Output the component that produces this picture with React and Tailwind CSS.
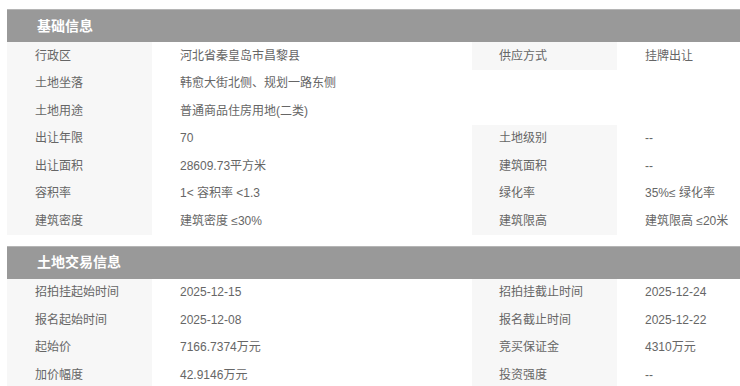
import React from "react";

const font = { fontFamily: '"Liberation Sans", "Noto Sans CJK SC", sans-serif' };

const basic = [
  ["行政区", "河北省秦皇岛市昌黎县", "供应方式", "挂牌出让"],
  ["土地坐落", "韩愈大街北侧、规划一路东侧"],
  ["土地用途", "普通商品住房用地(二类)"],
  ["出让年限", "70", "土地级别", "--"],
  ["出让面积", "28609.73平方米", "建筑面积", "--"],
  ["容积率", "1< 容积率 <1.3", "绿化率", "35%≤ 绿化率"],
  ["建筑密度", "建筑密度 ≤30%", "建筑限高", "建筑限高 ≤20米"],
];

const trade = [
  ["招拍挂起始时间", "2025-12-15", "招拍挂截止时间", "2025-12-24"],
  ["报名起始时间", "2025-12-08", "报名截止时间", "2025-12-22"],
  ["起始价", "7166.7374万元", "竞买保证金", "4310万元"],
  ["加价幅度", "42.9146万元", "投资强度", "--"],
];

function Section({ title, rows }) {
  return (
    <div className="w-[760px]">
      <div className="h-[33px] bg-[#999999] border-t border-[#b5b5b5] flex items-center pl-[30px] text-white font-bold text-[14px]">
        {title}
      </div>
      <div className="grid grid-cols-[145px_320px_145px_1fr] text-[12px] text-[#666666]">
        {rows.map((r, i) =>
          r.length === 4 ? (
            <React.Fragment key={i}>
              <div className="h-[27.5px] flex items-center pl-[28px] bg-[#f7f7f7]">{r[0]}</div>
              <div className="h-[27.5px] flex items-center pl-[28px]">{r[1]}</div>
              <div className="h-[27.5px] flex items-center pl-[27px] bg-[#f7f7f7]">{r[2]}</div>
              <div className="h-[27.5px] flex items-center pl-[28px]">{r[3]}</div>
            </React.Fragment>
          ) : (
            <React.Fragment key={i}>
              <div className="h-[27.5px] flex items-center pl-[28px] bg-[#f7f7f7]">{r[0]}</div>
              <div className="h-[27.5px] flex items-center pl-[28px] col-span-3">{r[1]}</div>
            </React.Fragment>
          )
        )}
      </div>
    </div>
  );
}

export default function App() {
  return (
    <div className="w-[740px] h-[386px] overflow-hidden bg-white" style={font}>
      <div className="pl-[7px] pt-[9px] flex flex-col gap-[11px]">
        <Section title="基础信息" rows={basic} />
        <Section title="土地交易信息" rows={trade} />
      </div>
    </div>
  );
}
